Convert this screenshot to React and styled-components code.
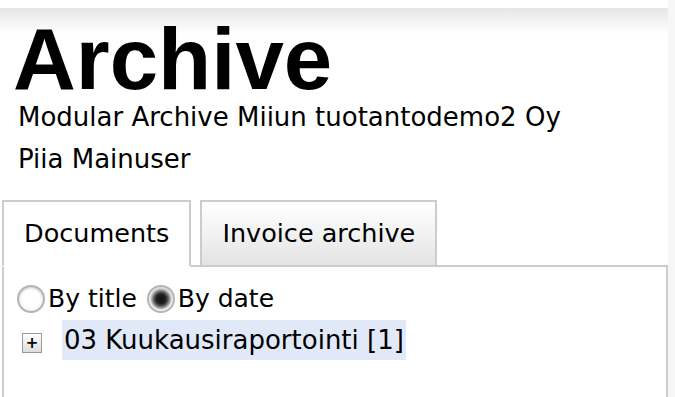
import React, { useState } from 'react';
import styled, { createGlobalStyle } from 'styled-components';

const GlobalStyle = createGlobalStyle`
  html, body {
    margin: 0;
    padding: 0;
    background: #f7f7f7;
    overflow: hidden;
  }
  body {
    font-family: "DejaVu Sans", Verdana, sans-serif;
    color: #000;
  }
`;

const Page = styled.div`
  width: 668px;
  min-height: 397px;
  background: linear-gradient(to bottom, #ffffff 0, #ffffff 8px, #e6e6e6 8px, #ffffff 34px, #ffffff 100%);
`;

const Header = styled.header`
  padding: 22px 0 0 0;
`;

const Title = styled.h1`
  margin: 0 0 0 13px;
  font-family: "Liberation Sans", Arial, sans-serif;
  font-weight: bold;
  font-size: 87px;
  line-height: 74px;
`;

const InfoLine = styled.div`
  margin-left: 18px;
  font-size: 26px;
  line-height: 42px;
`;

const TabList = styled.div`
  display: flex;
  align-items: flex-end;
  gap: 9px;
  margin: 20px 0 -2px 2px;
  position: relative;
  z-index: 1;
`;

const Tab = styled.div`
  height: 63px;
  padding: 0 20px;
  font-size: 25.5px;
  line-height: 63px;
  border: 2px solid #cccccc;
  border-bottom-color: ${p => (p.$active ? '#ffffff' : '#cccccc')};
  background: ${p => (p.$active ? '#ffffff' : 'linear-gradient(to bottom, #ffffff 0%, #f2f2f2 50%, #e3e3e3 100%)')};
  cursor: pointer;
`;

const Panel = styled.div`
  margin-left: 2px;
  width: 666px;
  box-sizing: border-box;
  min-height: 140px;
  border: 2px solid #cccccc;
  border-bottom: none;
  background: #fff;
  padding: 14px 0 0 13px;
`;

const RadioRow = styled.div`
  display: flex;
  align-items: center;
  height: 36px;
  font-size: 25px;
  line-height: 36px;
`;

const RadioOption = styled.label`
  display: flex;
  align-items: center;
  gap: 3px;
  margin-right: 10px;
  cursor: pointer;
`;

const RadioCircle = styled.span`
  width: 24px;
  height: 24px;
  border-radius: 50%;
  border: 2px solid #b4b4b4;
  background: ${p => (p.$checked
    ? 'radial-gradient(circle, #111 0, #222 5px, #777 8px, #eee 11px, #fff 12px)'
    : 'radial-gradient(circle, #fff 0, #fff 8px, #f2f2f2 12px)')};
  box-shadow: inset 0 1px 2px rgba(0, 0, 0, 0.15);
`;

const TreeRow = styled.div`
  display: flex;
  align-items: flex-start;
  margin-top: 3px;
`;

const Toggle = styled.span`
  width: 18px;
  height: 18px;
  margin: 13px 0 0 5px;
  border: 1px solid #9a9a9a;
  background: linear-gradient(to bottom, #ffffff, #dcdcdc);
  display: flex;
  align-items: center;
  justify-content: center;
  font-family: "DejaVu Sans", sans-serif;
  font-weight: bold;
  font-size: 15px;
  line-height: 1;
  color: #000;
`;

const NodeLabel = styled.span`
  margin-left: 20px;
  padding: 0 2px;
  font-size: 26px;
  line-height: 40px;
  height: 40px;
  background: #e1e9f9;
`;

export default function App() {
  const [tab, setTab] = useState('docs');
  const [order, setOrder] = useState('date');

  return (
    <>
      <GlobalStyle />
      <Page>
        <Header>
          <Title>Archive</Title>
          <InfoLine>Modular Archive Miiun tuotantodemo2 Oy</InfoLine>
          <InfoLine>Piia Mainuser</InfoLine>
        </Header>

        <TabList>
          <Tab $active={tab === 'docs'} onClick={() => setTab('docs')}>Documents</Tab>
          <Tab $active={tab === 'invoice'} onClick={() => setTab('invoice')}>Invoice archive</Tab>
        </TabList>

        <Panel>
          <RadioRow>
            <RadioOption onClick={() => setOrder('title')}>
              <RadioCircle $checked={order === 'title'} />
              By title
            </RadioOption>
            <RadioOption onClick={() => setOrder('date')}>
              <RadioCircle $checked={order === 'date'} />
              By date
            </RadioOption>
          </RadioRow>
          <TreeRow>
            <Toggle>+</Toggle>
            <NodeLabel>03 Kuukausiraportointi [1]</NodeLabel>
          </TreeRow>
        </Panel>
      </Page>
    </>
  );
}
